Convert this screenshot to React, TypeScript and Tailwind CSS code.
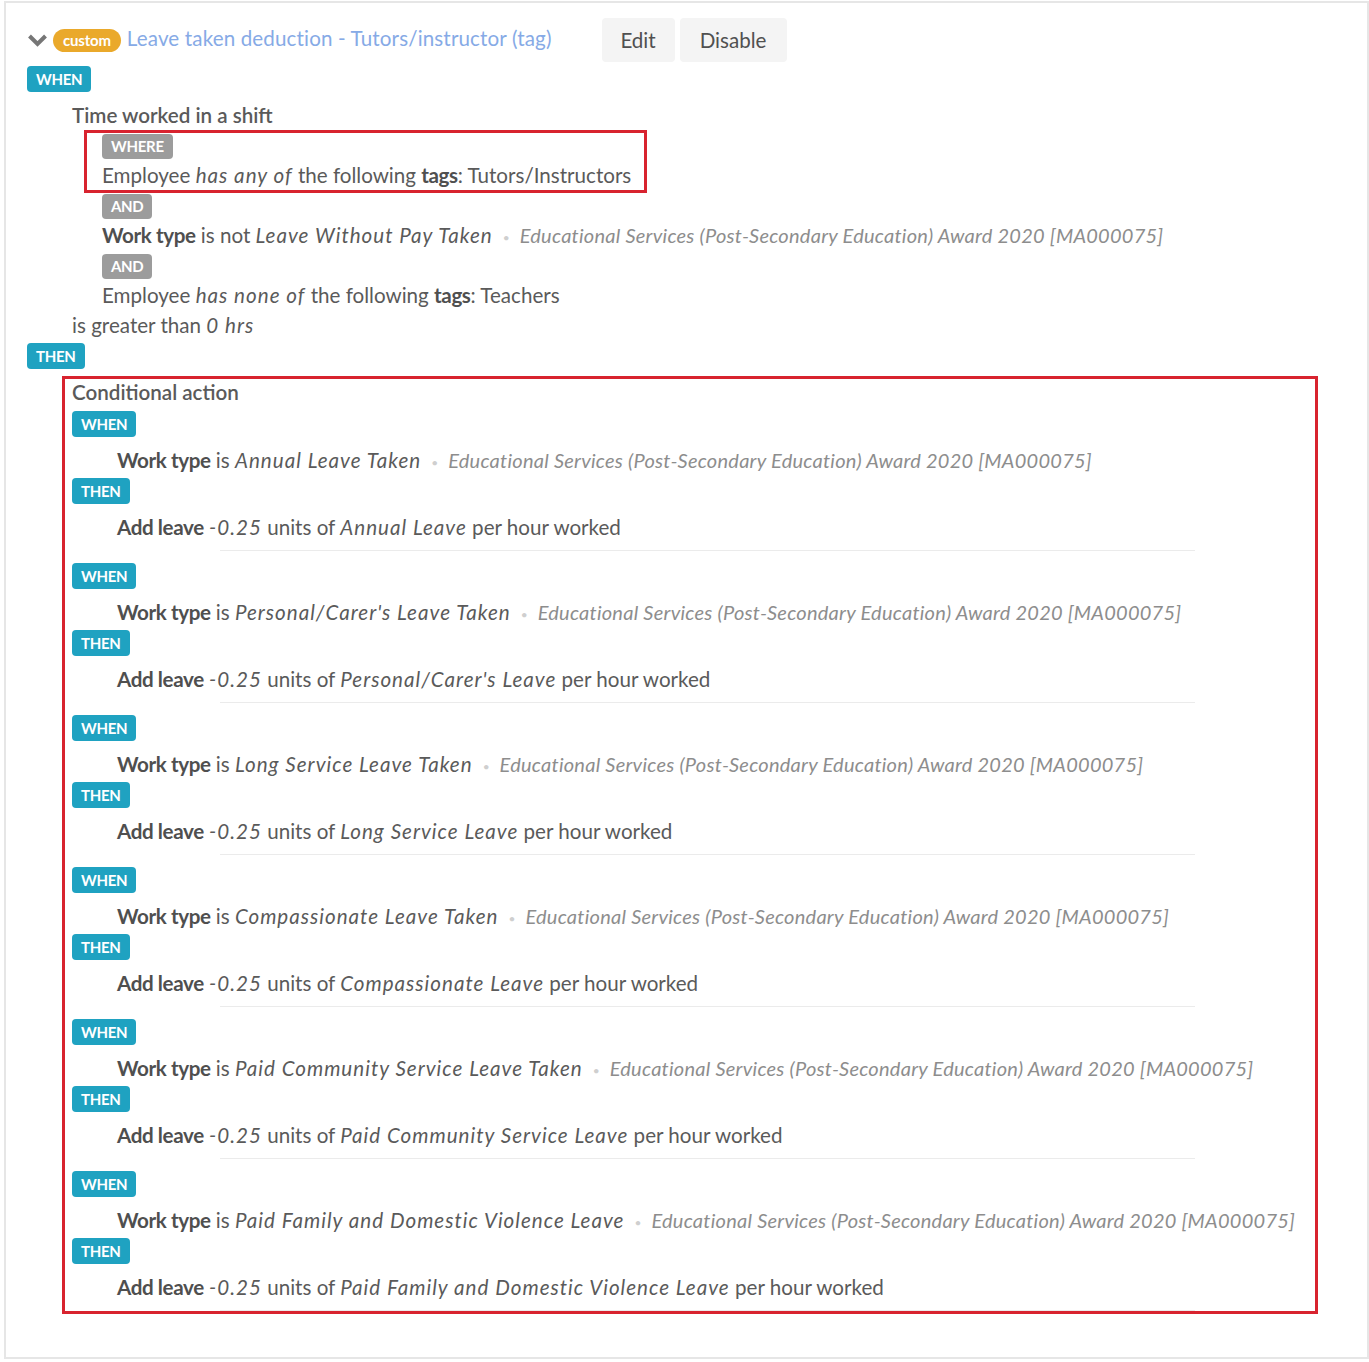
type Tone = 'teal' | 'gray';

const AWARD = 'Educational Services (Post-Secondary Education) Award 2020 [MA000075]';

const actions = [
  { workType: 'Annual Leave Taken', leave: 'Annual Leave' },
  { workType: "Personal/Carer's Leave Taken", leave: "Personal/Carer's Leave" },
  { workType: 'Long Service Leave Taken', leave: 'Long Service Leave' },
  { workType: 'Compassionate Leave Taken', leave: 'Compassionate Leave' },
  { workType: 'Paid Community Service Leave Taken', leave: 'Paid Community Service Leave' },
  { workType: 'Paid Family and Domestic Violence Leave', leave: 'Paid Family and Domestic Violence Leave' },
];

function Tag({ label, tone, className = '' }: { label: string; tone: Tone; className?: string }) {
  const bg = tone === 'teal' ? 'bg-[#1fa2c1] h-[26px]' : 'bg-[#9c9c9c] h-[25px]';
  return (
    <div className={`flex ${className}`}>
      <span
        className={`${bg} inline-flex items-center rounded-[4px] px-[9px] text-[15px] font-bold tracking-[-0.3px] text-white`}
      >
        {label}
      </span>
    </div>
  );
}

function I({ children }: { children: React.ReactNode }) {
  return <em className="tracking-[1px]">{children}</em>;
}

function B({ children }: { children: React.ReactNode }) {
  return <b className="tracking-[-0.4px] text-[#4f4f4f]">{children}</b>;
}

function Award() {
  return (
    <>
      <span className="mx-[10px] align-middle text-[12px] leading-none text-[#cfcfcf]">•</span>
      <em className="text-[20px] tracking-[0.25px] text-[#8d8d8d]">{AWARD}</em>
    </>
  );
}

function Highlight({ className }: { className: string }) {
  return <div className={`pointer-events-none absolute border-[3px] border-[#d8232f] ${className}`} />;
}

export default function App() {
  return (
    <div className="min-h-[1362px] bg-white font-['Lato',sans-serif] text-[20.6px] text-[#5a5a5a]">
      <div className="ml-[4px] mt-[1px] h-[1358px] w-[1365px] border-2 border-[#e6e6e6] pl-[21px] pt-[15px]">
        {/* rule header */}
        <div className="flex h-[44px] items-center">
          <svg width="21" height="14" viewBox="0 0 21 14">
            <polyline points="2.5,3 10.5,11 18.5,3" fill="none" stroke="#767676" strokeWidth="4" />
          </svg>
          <span className="ml-[5px] inline-flex h-[23px] items-center rounded-full bg-[#eaa92b] px-[10px] text-[15px] font-bold tracking-[-0.2px] text-white">
            custom
          </span>
          <span className="ml-[6px] -mt-[4px] tracking-[0.13px] text-[#86aae6]">
            Leave taken deduction - Tutors/instructor (tag)
          </span>
          <div className="ml-[50px] flex gap-[5px]">
            <button className="h-[44px] w-[73px] rounded-[4px] bg-[#f4f4f4] text-[#505050]">Edit</button>
            <button className="h-[44px] w-[107px] rounded-[4px] bg-[#f4f4f4] text-[#505050]">Disable</button>
          </div>
        </div>

        <Tag label="WHEN" tone="teal" className="mt-[4px]" />

        <div className="pl-[45px]">
          <div className="mt-[8px] font-semibold leading-[30px]">Time worked in a shift</div>

          <div className="pl-[30px]">
            <div className="relative">
              <Highlight className="-left-[18px] top-0 h-[63px] w-[563px]" />
              <Tag label="WHERE" tone="gray" className="pt-[4px]" />
              <div className="mt-[1px] leading-[30px]">
                Employee <I>has any of</I> the following <B>tags</B>: Tutors/Instructors
              </div>
            </div>
            <Tag label="AND" tone="gray" className="mt-[4px]" />
            <div className="mt-[1px] leading-[30px]">
              <B>Work type</B> is not <I>Leave Without Pay Taken</I>
              <Award />
            </div>
            <Tag label="AND" tone="gray" className="mt-[4px]" />
            <div className="mt-[1px] leading-[30px]">
              Employee <I>has none of</I> the following <B>tags</B>: Teachers
            </div>
          </div>

          <div className="leading-[30px]">
            is greater than <I>0 hrs</I>
          </div>
        </div>

        <Tag label="THEN" tone="teal" className="mt-[3px]" />

        {/* conditional actions */}
        <div className="relative ml-[45px] mt-[8px]">
          <Highlight className="-left-[10px] -top-[1px] -bottom-[3px] w-[1256px]" />
          <div className="font-semibold leading-[30px]">Conditional action</div>
          {actions.map((a, i) => (
            <div key={a.workType} className={i === 0 ? 'mt-[4px]' : 'mt-[12px]'}>
              <Tag label="WHEN" tone="teal" />
              <div className="mt-[8px] pl-[45px] leading-[30px]">
                <B>Work type</B> is <I>{a.workType}</I>
                <Award />
              </div>
              <Tag label="THEN" tone="teal" className="mt-[3px]" />
              <div className="mt-[8px] pl-[45px] leading-[30px]">
                <B>Add leave</B> <I>-0.25</I> units of <I>{a.leave}</I> per hour worked
              </div>
              <div className="ml-[148px] mt-[8px] h-px w-[975px] bg-[#ebebeb]" />
            </div>
          ))}
        </div>
      </div>
    </div>
  );
}
